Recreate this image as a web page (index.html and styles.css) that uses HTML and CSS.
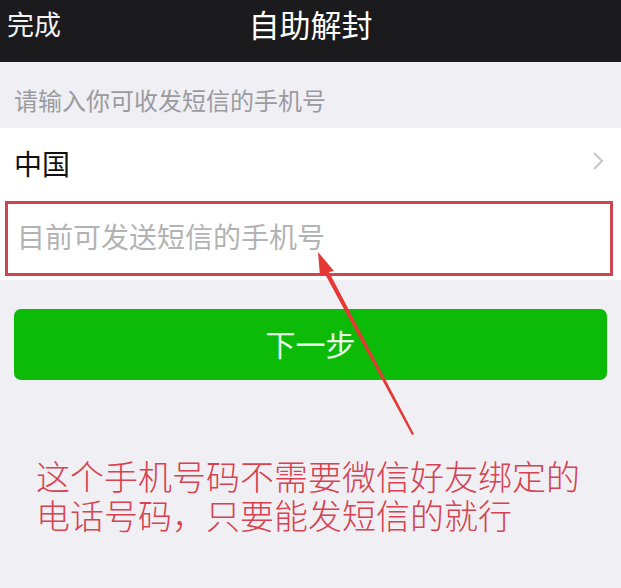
FILE: index.html
```html
<!DOCTYPE html>
<html lang="zh-CN">
<head>
<meta charset="utf-8">
<title>自助解封</title>
<link rel="stylesheet" href="styles.css">
</head>
<body>
<div class="page">
  <header class="nav">
    <span class="nav-left">完成</span>
    <span class="nav-title">自助解封</span>
    <span class="nav-right"></span>
  </header>
  <div class="section-label">请输入你可收发短信的手机号</div>
  <div class="list">
    <div class="row country">
      <span>中国</span>
      <svg class="chevron" width="12" height="20" viewBox="0 0 12 20"><path d="M2 2 L10 10 L2 18" fill="none" stroke="#c7c7cc" stroke-width="2.2"/></svg>
    </div>
    <div class="row phone">
      <div class="phone-box">目前可发送短信的手机号</div>
    </div>
  </div>
  <div class="btn-wrap"><div class="btn">下一步</div></div>
  <div class="note">
    <div class="note-line">这个手机号码不需要微信好友绑定的</div>
    <div class="note-line">电话号码，只要能发短信的就行</div>
  </div>
  <svg class="arrow" width="621" height="588" viewBox="0 0 621 588">
    <polygon points="318,252 334,271 329,272 414,434 412,435 325,274 320,276" fill="#e53935"/>
  </svg>
</div>
</body>
</html>
```

FILE: styles.css
```css
* { box-sizing: border-box; }
html, body { margin: 0; padding: 0; }
body {
  background: #efeff4;
  font-family: "Noto Sans CJK SC", "Noto Sans", sans-serif;
}
.page {
  position: relative;
  width: 621px;
  height: 588px;
  overflow: hidden;
}
.nav {
  height: 62px;
  background: #1b1b1d;
  display: grid;
  grid-template-columns: 1fr auto 1fr;
  align-items: center;
  padding: 0 7px 14px;
  color: #fff;
}
.nav-left { font-size: 27px; line-height: 32px; color: #f2f2f2; }
.nav-title { font-size: 31px; line-height: 36px; }
.section-label {
  height: 66px;
  padding: 22px 0 0 14px;
  font-size: 24px;
  line-height: 32px;
  color: #9b9b9f;
}
.list { background: #fff; }
.row { display: flex; align-items: center; }
.country {
  height: 70px;
  padding: 0 17px 0 14px;
  justify-content: space-between;
  font-size: 28px;
  color: #111;
}
.chevron { margin-top: -4px; }
.phone {
  height: 82px;
  padding: 3px 8px 4px 5px;
}
.phone-box {
  flex: 1;
  height: 100%;
  border: 3px solid #cc4651;
  padding: 0 0 6px 9px;
  display: flex;
  align-items: center;
  font-size: 28px;
  color: #b3b3b3;
}
.btn-wrap { padding: 29px 14px 0; }
.btn {
  height: 71px;
  background: #0bbb08;
  border-radius: 7px;
  display: flex;
  align-items: center;
  justify-content: center;
  font-size: 30px;
  color: #e8ffe8;
  padding-bottom: 4px;
}
.note {
  margin-top: 76px;
  padding-left: 36px;
  display: flex;
  flex-direction: column;
}
.note-line {
  font-size: 34px;
  line-height: 39px;
  height: 39px;
  color: #d8414f;
  font-weight: 300;
}
.arrow {
  position: absolute;
  left: 0;
  top: 0;
}
```
